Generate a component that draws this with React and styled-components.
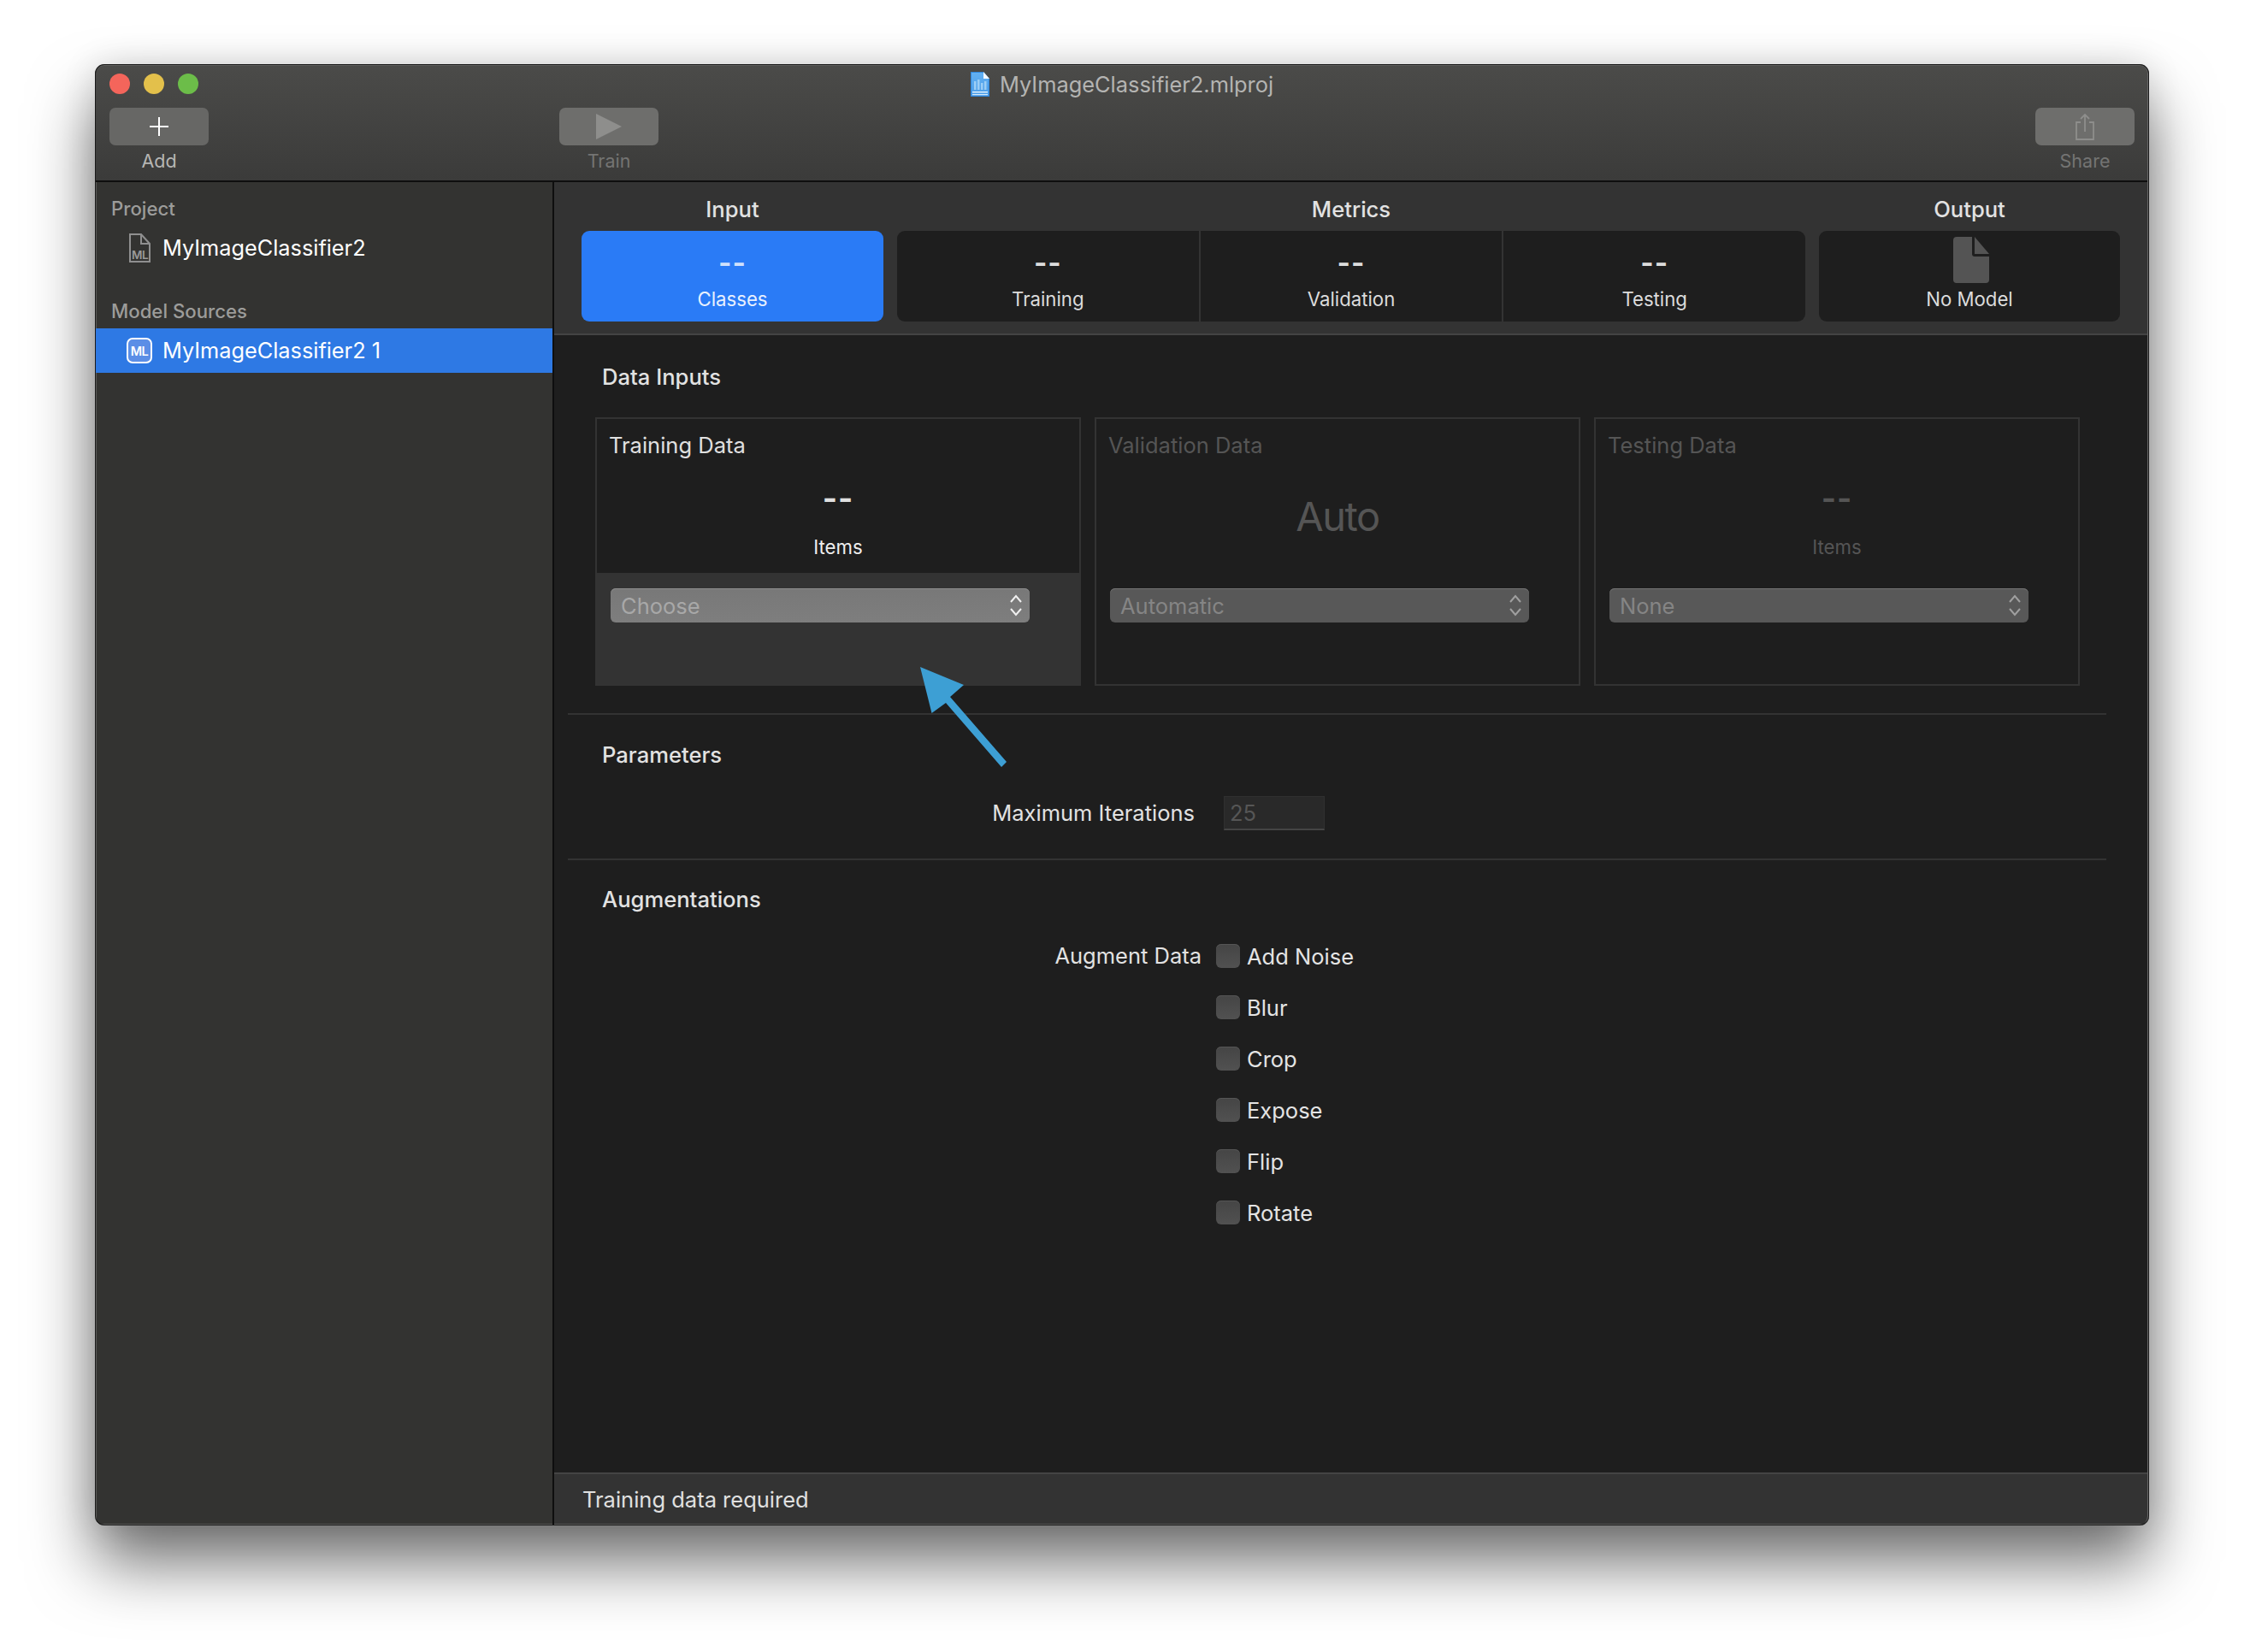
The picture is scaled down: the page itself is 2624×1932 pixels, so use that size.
import React from 'react';
import styled, { createGlobalStyle } from 'styled-components';

const Global = createGlobalStyle`
  html, body { margin: 0; padding: 0; background: #fff; }
  body { font-family: Inter, "Liberation Sans", sans-serif; -webkit-font-smoothing: antialiased; }
  * { box-sizing: border-box; }
`;

const Page = styled.div`
  width: 2624px;
  height: 1932px;
  padding: 75px 0 0 111px;
  overflow: hidden;
`;
const Shadow = styled.div`
  width: 2402px;
  height: 1709px;
  border-radius: 11px;
  box-shadow: 0 44px 76px rgba(0,0,0,.56), 0 0 40px rgba(0,0,0,.12);
`;
const Win = styled.div`
  position: relative;
  width: 100%;
  height: 100%;
  display: flex;
  flex-direction: column;
  border-radius: 11px;
  overflow: hidden;
`;
const Edge = styled.div`
  position: absolute;
  inset: 0;
  border-radius: 11px;
  pointer-events: none;
  box-shadow: inset 0 0 0 1px #1a1a1a, inset -2px 0 0 #666, inset 0 2px 0 #5c5c5a;
`;
const Toolbar = styled.header`
  height: 138px;
  flex: none;
  border-bottom: 2px solid #0e0e0e;
  background: linear-gradient(#4b4b49, #3b3b3a);
  display: flex;
  flex-direction: column;
`;
const TitleRow = styled.div`
  position: relative;
  height: 51px;
  flex: none;
  display: flex;
  align-items: center;
  justify-content: center;
  gap: 12px;
  padding-bottom: 5px;
  color: #b4b4b2;
  font-size: 25.4px;
`;
const Lights = styled.div`
  position: absolute;
  left: 17px;
  top: 11px;
  display: flex;
  gap: 16px;
`;
const Light = styled.span`
  width: 24px;
  height: 24px;
  border-radius: 50%;
  background: ${p => p.$c};
`;
const ToolRow = styled.div`
  display: flex;
  flex: 1;
`;
const ToolLeft = styled.div`
  width: 537px;
  padding-left: 17px;
  flex: none;
`;
const ToolMid = styled.div`
  padding-left: 6px;
  flex: 1;
`;
const ToolRight = styled.div`
  padding-right: 17px;
  flex: none;
`;
const Tool = styled.div`
  width: 116px;
  display: flex;
  flex-direction: column;
  align-items: center;
  color: ${p => (p.$off ? '#747473' : '#b6b6b4')};
  font-size: 21.5px;
  line-height: 28px;
`;
const ToolBtn = styled.div`
  width: 116px;
  height: 44px;
  margin-bottom: 4px;
  border-radius: 7px;
  background: ${p => (p.$off ? '#6e6e6c' : '#676765')};
  display: flex;
  align-items: center;
  justify-content: center;
`;
const Body = styled.div`
  flex: 1;
  display: flex;
  min-height: 0;
`;
const Side = styled.aside`
  width: 537px;
  flex: none;
  background: #333331;
  border-right: 2px solid #0e0e0e;
  padding-top: 17px;
  box-shadow: inset 2px -2px 0 #5a5a58;
`;
const SideLabel = styled.div`
  padding-left: 19px;
  margin-top: ${p => p.$mt || 0}px;
  margin-bottom: ${p => p.$mb || 0}px;
  font-size: 22.2px;
  line-height: 28px;
  font-weight: 500;
  color: #9c9c9a;
`;
const SideRow = styled.div`
  height: 52px;
  padding: 0 0 2px 37px;
  display: flex;
  align-items: center;
  gap: 12px;
  color: #fff;
  font-size: 25.3px;
  background: ${p => (p.$sel ? '#2e79e4' : 'transparent')};
`;
const IconBox = styled.span`
  width: 30px;
  height: 36px;
  margin-top: 2px;
  display: flex;
  align-items: center;
  justify-content: center;
  flex: none;
`;
const Main = styled.main`
  flex: 1;
  display: flex;
  flex-direction: column;
  min-width: 0;
  background: #1e1e1e;
`;
const Tabs = styled.div`
  flex: none;
  height: 179px;
  padding: 18px 34px 0 32px;
  background: #333;
  border-bottom: 2px solid #444;
  display: grid;
  grid-template-columns: 353px 1062px 352px;
  column-gap: 16px;
`;
const TabGroup = styled.div`
  display: flex;
  flex-direction: column;
`;
const TabHead = styled.div`
  height: 28px;
  line-height: 28px;
  margin-bottom: 11px;
  text-align: center;
  font-size: 25.6px;
  font-weight: 500;
  color: #e2e2e2;
`;
const TileRow = styled.div`
  height: 106px;
  display: flex;
  border-radius: 9px;
  overflow: hidden;
  background: ${p => (p.$blue ? '#2a7bf6' : '#1e1e1e')};
`;
const Tile = styled.div`
  flex: 1;
  display: flex;
  flex-direction: column;
  align-items: center;
  gap: ${p => (p.$icon ? 5 : 0)}px;
  padding-top: ${p => (p.$icon ? 7 : 23)}px;
  color: ${p => (p.$blue ? '#cfe0fb' : '#dcdcdc')};
  & + & { border-left: 2px solid #333; }
`;
const TileValue = styled.div`
  height: 28px;
  line-height: 28px;
  margin-bottom: 15px;
  font-size: 33px;
  letter-spacing: 1px;
  font-weight: 700;
`;
const TileLabel = styled.div`
  height: 28px;
  line-height: 28px;
  font-size: 22.2px;
  color: ${p => (p.$blue ? '#e8f0fe' : '#dcdcdc')};
`;
const Content = styled.div`
  flex: 1;
  min-height: 0;
  display: flex;
  flex-direction: column;
`;
const Section = styled.section`
  margin: 0 50px 0 16px;
  padding: ${p => p.$pt}px 0 ${p => p.$pb}px 32px;
  border-bottom: ${p => (p.$last ? 'none' : '2px solid #333')};
`;
const Heading = styled.h2`
  margin: 0 0 ${p => p.$mb}px;
  padding-left: 8px;
  height: 28px;
  line-height: 28px;
  font-size: 25.6px;
  font-weight: 500;
  color: #e2e2e2;
`;
const Cards = styled.div`
  display: grid;
  grid-template-columns: repeat(3, 568px);
  column-gap: 16px;
`;
const Card = styled.div`
  height: 314px;
  border: 2px solid #333;
  display: flex;
  flex-direction: column;
  color: ${p => (p.$off ? '#555' : '#e0e0e0')};
`;
const CardTop = styled.div`
  height: 180px;
  flex: none;
  padding-top: 17px;
  display: flex;
  flex-direction: column;
  align-items: center;
`;
const CardTitle = styled.div`
  align-self: flex-start;
  padding-left: 14px;
  height: 28px;
  line-height: 28px;
  font-size: 25.5px;
`;
const CardValue = styled.div`
  margin-top: 28px;
  height: 40px;
  line-height: 40px;
  font-size: 37px;
  letter-spacing: 1px;
  font-weight: 700;
`;
const CardAuto = styled.div`
  margin-top: 39px;
  height: 60px;
  line-height: 60px;
  font-size: 47px;
  letter-spacing: -1.5px;
`;
const CardUnit = styled.div`
  margin-top: 23px;
  height: 28px;
  line-height: 28px;
  font-size: 22.2px;
  color: ${p => (p.$off ? '#555' : '#eee')};
`;
const CardFoot = styled.div`
  flex: 1;
  padding: 18px 0 0 16px;
  background: ${p => (p.$hi ? '#333' : 'transparent')};
`;
const Select = styled.div`
  width: 490px;
  height: 40px;
  padding: 0 8px 0 12px;
  border-radius: 6px;
  display: flex;
  align-items: center;
  justify-content: space-between;
  font-size: 25.5px;
  color: ${p => (p.$hi ? '#a8a8a8' : '#858585')};
  background: ${p => (p.$hi ? 'linear-gradient(#787878, #7e7e7e)' : '#585858')};
  box-shadow: inset 0 1px 0 ${p => (p.$hi ? '#8c8c8c' : '#737373')};
`;
const Row = styled.div`
  display: flex;
  align-items: ${p => p.$align || 'center'};
`;
const RowLabel = styled.div`
  flex: none;
  width: ${p => p.$w}px;
  text-align: right;
  font-size: 25.5px;
  line-height: 28px;
  color: #e2e2e2;
`;
const NumberBox = styled.div`
  margin-left: 34px;
  width: 118px;
  height: 40px;
  padding-left: 6px;
  line-height: 38px;
  font-size: 25.5px;
  color: #565656;
  background: #292929;
  border: 1px solid #303030;
  border-bottom: 2px solid #444;
`;
const Checks = styled.div`
  margin-left: 17px;
  display: flex;
  flex-direction: column;
  gap: 32px;
`;
const Check = styled.div`
  height: 28px;
  display: flex;
  align-items: center;
  gap: 8px;
  font-size: 25.5px;
  color: #e4e4e4;
`;
const Box = styled.span`
  width: 28px;
  height: 28px;
  flex: none;
  border-radius: 6px;
  background: linear-gradient(#454545, #515151);
  box-shadow: inset 0 1px 0 #555;
`;
const Footer = styled.footer`
  flex: none;
  height: 62px;
  padding: 0 0 2px 33px;
  display: flex;
  align-items: center;
  background: #333;
  border-top: 2px solid #444;
  box-shadow: inset 0 -2px 0 #5a5a58;
  color: #e0e0e0;
  font-size: 25.5px;
`;
const Arrow = styled.svg`
  position: absolute;
  left: 965px;
  top: 705px;
  width: 120px;
  height: 130px;
`;
const DocOutput = styled.svg`
  margin-left: 3px;
  flex: none;
`;

const MLDoc = () => (
  <svg width="25" height="34" viewBox="0 0 25 34">
    <path d="M1 1h13l10 11v21H1z M14 1v11h10" fill="none" stroke="#8f8f8f" strokeWidth="2" />
    <text x="12.5" y="29.5" fontSize="13.5" fontWeight="600" fill="#9a9a9a" textAnchor="middle" fontFamily="Inter" letterSpacing="-.5">ML</text>
  </svg>
);
const MLBadge = () => (
  <svg width="30" height="30" viewBox="0 0 30 30">
    <rect x="1" y="1" width="28" height="28" rx="6" fill="#5b8ee6" stroke="#fff" strokeWidth="2" />
    <text x="15" y="20.5" fontSize="14.5" fontWeight="600" fill="#fff" textAnchor="middle" fontFamily="Inter" letterSpacing="-.5">ML</text>
  </svg>
);
const TitleDoc = () => (
  <svg width="22" height="29" viewBox="0 0 22 29">
    <defs>
      <linearGradient id="td" x1="0" y1="0" x2="0" y2="1">
        <stop offset="0" stopColor="#62b0f2" />
        <stop offset="1" stopColor="#4b9de8" />
      </linearGradient>
    </defs>
    <path d="M0 0h15l7 8v21H0z" fill="#2f86dc" />
    <path d="M1 1h13.5l6.5 7.5V28H1z" fill="url(#td)" />
    <path d="M15 0v8h7z" fill="#f4f9fe" />
    <path d="M4 11h2.5v10H4zM8 9h2.5v12H8zM12 13h2.5v8H12zM16 11h2.5v10H16z" fill="#a8d5f7" opacity=".85" />
    <rect x="2" y="23" width="18" height="1.4" fill="#e8f4fd" />
    <rect x="2" y="26" width="18" height="1.2" fill="#d6ebfb" />
  </svg>
);
const Plus = () => (
  <svg width="24" height="24" viewBox="0 0 24 24">
    <path d="M12 1v22M1 12h22" stroke="#fff" strokeWidth="2" />
  </svg>
);
const Play = () => (
  <svg width="30" height="30" viewBox="0 0 30 30">
    <path d="M0 0l30 15L0 30z" fill="#8e8e8c" />
  </svg>
);
const ShareIcon = () => (
  <svg width="24" height="32" viewBox="0 0 24 32">
    <path d="M7 11H2v20h20V11h-5M12 22V2M7 7l5-5 5 5" fill="none" stroke="#8e8e8c" strokeWidth="1.8" />
  </svg>
);
const Updown = ({ c }) => (
  <svg width="16" height="30" viewBox="0 0 16 30">
    <path d="M2 11l6-7 6 7M2 19l6 7 6-7" fill="none" stroke={c} strokeWidth="2" />
  </svg>
);
const BlankDoc = () => (
  <DocOutput width="42" height="54" viewBox="0 0 42 54">
    <path d="M4 0h18v20a3 3 0 003 3h17v27a4 4 0 01-4 4H4a4 4 0 01-4-4V4a4 4 0 014-4z" fill="#545454" />
    <path d="M25 0l17 20H25z" fill="#545454" />
  </DocOutput>
);

const checks = ['Add Noise', 'Blur', 'Crop', 'Expose', 'Flip', 'Rotate'];

export default function App() {
  return (
    <Page>
      <Global />
      <Shadow>
        <Win>
          <Toolbar>
            <TitleRow>
              <Lights>
                <Light $c="#f4655b" />
                <Light $c="#e3c04b" />
                <Light $c="#6cbd49" />
              </Lights>
              <TitleDoc />
              <span>MyImageClassifier2.mlproj</span>
            </TitleRow>
            <ToolRow>
              <ToolLeft>
                <Tool><ToolBtn><Plus /></ToolBtn>Add</Tool>
              </ToolLeft>
              <ToolMid>
                <Tool $off><ToolBtn $off><Play /></ToolBtn>Train</Tool>
              </ToolMid>
              <ToolRight>
                <Tool $off><ToolBtn $off><ShareIcon /></ToolBtn>Share</Tool>
              </ToolRight>
            </ToolRow>
          </Toolbar>
          <Body>
            <Side>
              <SideLabel $mb={6}>Project</SideLabel>
              <SideRow><IconBox><MLDoc /></IconBox>MyImageClassifier2</SideRow>
              <SideLabel $mt={34} $mb={6}>Model Sources</SideLabel>
              <SideRow $sel><IconBox><MLBadge /></IconBox>MyImageClassifier2 1</SideRow>
            </Side>
            <Main>
              <Tabs>
                <TabGroup>
                  <TabHead>Input</TabHead>
                  <TileRow $blue>
                    <Tile $blue><TileValue>--</TileValue><TileLabel $blue>Classes</TileLabel></Tile>
                  </TileRow>
                </TabGroup>
                <TabGroup>
                  <TabHead>Metrics</TabHead>
                  <TileRow>
                    <Tile><TileValue>--</TileValue><TileLabel>Training</TileLabel></Tile>
                    <Tile><TileValue>--</TileValue><TileLabel>Validation</TileLabel></Tile>
                    <Tile><TileValue>--</TileValue><TileLabel>Testing</TileLabel></Tile>
                  </TileRow>
                </TabGroup>
                <TabGroup>
                  <TabHead>Output</TabHead>
                  <TileRow>
                    <Tile $icon><BlankDoc /><TileLabel>No Model</TileLabel></Tile>
                  </TileRow>
                </TabGroup>
              </Tabs>
              <Content>
                <Section $pt={35} $pb={32}>
                  <Heading $mb={33}>Data Inputs</Heading>
                  <Cards>
                    <Card>
                      <CardTop>
                        <CardTitle>Training Data</CardTitle>
                        <CardValue>--</CardValue>
                        <CardUnit>Items</CardUnit>
                      </CardTop>
                      <CardFoot $hi>
                        <Select $hi>Choose<Updown c="#f0f0f0" /></Select>
                      </CardFoot>
                    </Card>
                    <Card $off>
                      <CardTop>
                        <CardTitle>Validation Data</CardTitle>
                        <CardAuto>Auto</CardAuto>
                      </CardTop>
                      <CardFoot>
                        <Select>Automatic<Updown c="#a0a0a0" /></Select>
                      </CardFoot>
                    </Card>
                    <Card $off>
                      <CardTop>
                        <CardTitle>Testing Data</CardTitle>
                        <CardValue>--</CardValue>
                        <CardUnit $off>Items</CardUnit>
                      </CardTop>
                      <CardFoot>
                        <Select>None<Updown c="#a0a0a0" /></Select>
                      </CardFoot>
                    </Card>
                  </Cards>
                </Section>
                <Section $pt={33} $pb={33}>
                  <Heading $mb={34}>Parameters</Heading>
                  <Row>
                    <RowLabel $w={701}>Maximum Iterations</RowLabel>
                    <NumberBox>25</NumberBox>
                  </Row>
                </Section>
                <Section $pt={32} $pb={0} $last>
                  <Heading $mb={38}>Augmentations</Heading>
                  <Row $align="flex-start">
                    <RowLabel $w={709}>Augment Data</RowLabel>
                    <Checks>
                      {checks.map(c => <Check key={c}><Box />{c}</Check>)}
                    </Checks>
                  </Row>
                </Section>
              </Content>
              <Footer>Training data required</Footer>
            </Main>
          </Body>
          <Arrow viewBox="0 0 120 130">
            <path d="M0 0L51 21L35 35L101 111L95 117L30 42L13.5 54Z" fill="#3d9fd4" />
          </Arrow>
          <Edge />
        </Win>
      </Shadow>
    </Page>
  );
}
